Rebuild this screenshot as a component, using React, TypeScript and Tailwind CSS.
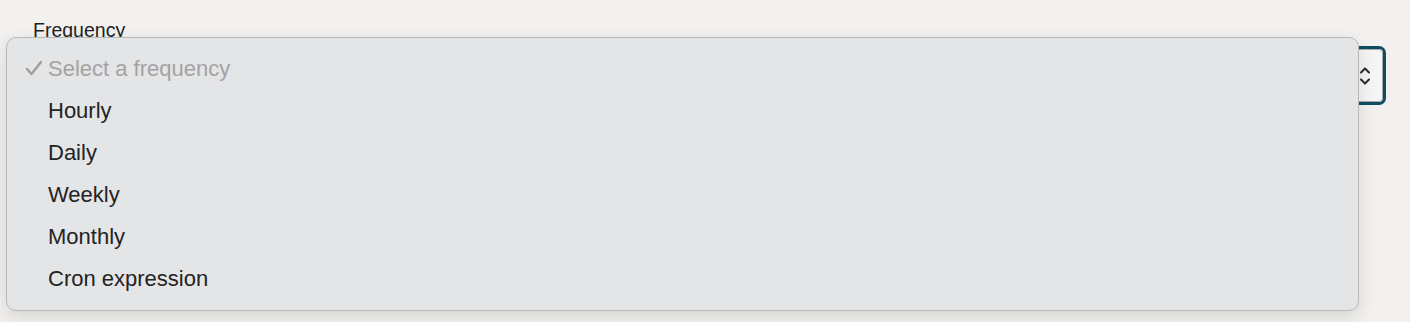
import React from 'react';

const options = ['Hourly', 'Daily', 'Weekly', 'Monthly', 'Cron expression'];

const Chevrons: React.FC = () => (
    <svg width="12" height="24" viewBox="0 0 12 24" fill="none" stroke="#2a2a2a" strokeWidth="2" strokeLinecap="round" strokeLinejoin="round">
        <path d="M2 8.5 L6 4.5 L10 8.5" />
        <path d="M2 15.5 L6 19.5 L10 15.5" />
    </svg>
);

const App: React.FC = () => {
    return (
        <div className="relative w-[1410px] h-[322px] overflow-hidden bg-[#f2f1ef] font-['Liberation_Sans',Arial,sans-serif]">
            <div className="pl-[33px] pt-[18px] pr-[24px]">
                <label className="block text-[19.5px] leading-[24px] text-[#1f1f1f]">Frequency</label>
                <div className="mt-[4px] ml-[-3px] h-[59px] border-[3px] border-[#0f4c63] rounded-[7px]">
                    <div className="h-full border border-[#a7a7a7] rounded-[4px] bg-[#f5f5f5] flex items-center justify-end pr-[11px]">
                        <Chevrons />
                    </div>
                </div>
            </div>

            {/* native-style open dropdown */}
            <div className="absolute left-[6px] top-[37px] w-[1353px] h-[274px] bg-[#e4e5e7] border border-[#b9b9b9] rounded-[10px] shadow-[0_6px_18px_rgba(0,0,0,0.12)] pt-[9px]">
                <div className="flex items-center h-[42px] text-[22px] text-[#a3a3a3]">
                    <span className="w-[41px] flex justify-end pr-[5px]">
                        <svg width="18" height="16" viewBox="0 0 18 16" fill="none" stroke="#9e9e9e" strokeWidth="2.4" strokeLinecap="round" strokeLinejoin="round">
                            <path d="M2 9 L6.5 14 L16 2" />
                        </svg>
                    </span>
                    <span>Select a frequency</span>
                </div>
                {options.map(o => (
                    <div key={o} className="flex items-center h-[42px] pl-[41px] text-[22px] text-[#232323]">
                        {o}
                    </div>
                ))}
            </div>
        </div>
    );
};

export default App;
